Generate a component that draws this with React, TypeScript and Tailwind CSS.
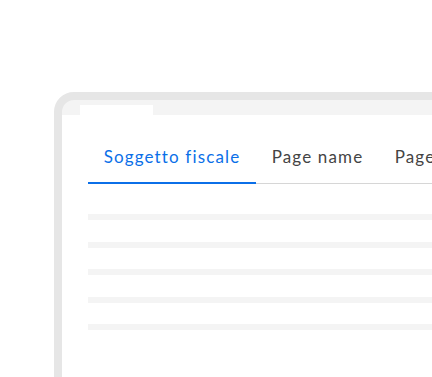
const tabs = ['Soggetto fiscale', 'Page name', 'Page name'];

const App = () => {
	return (
		<div className="w-[432px] h-[377px] overflow-hidden bg-white" style={{ fontFamily: 'Lato, "Open Sans", sans-serif' }}>
			<div className="ml-[54px] mt-[92px] w-[500px] h-[320px] border-[8px] border-[#e6e6e6] rounded-tl-[20px] bg-[#f4f4f4] pt-[5px]">
				<div className="ml-[18px] w-[73px] h-[10px] bg-white" />
				<div className="bg-white h-full pl-[26px] pt-[30px]">
					<div className="flex border-b border-[#d6d6d6]">
						{tabs.map((t, i) => (
							<div
								key={i}
								className={
									i === 0
										? 'w-[168px] shrink-0 text-center pb-[13px] -mb-px border-b-2 border-[#0b6fe8] text-[#0b6fe8] text-[17px] leading-[24px] tracking-[1.15px] whitespace-nowrap'
										: 'w-[123px] shrink-0 text-center pb-[13px] -mb-px text-[#444444] text-[17px] leading-[24px] tracking-[1.15px] whitespace-nowrap'
								}
							>
								{t}
							</div>
						))}
					</div>
					<div className="mt-[30px] flex flex-col gap-[21.5px]">
						{[0, 1, 2, 3, 4].map((n) => (
							<div key={n} className="h-[6px] bg-[#f4f4f4]" />
						))}
					</div>
				</div>
			</div>
		</div>
	);
};

export default App;
